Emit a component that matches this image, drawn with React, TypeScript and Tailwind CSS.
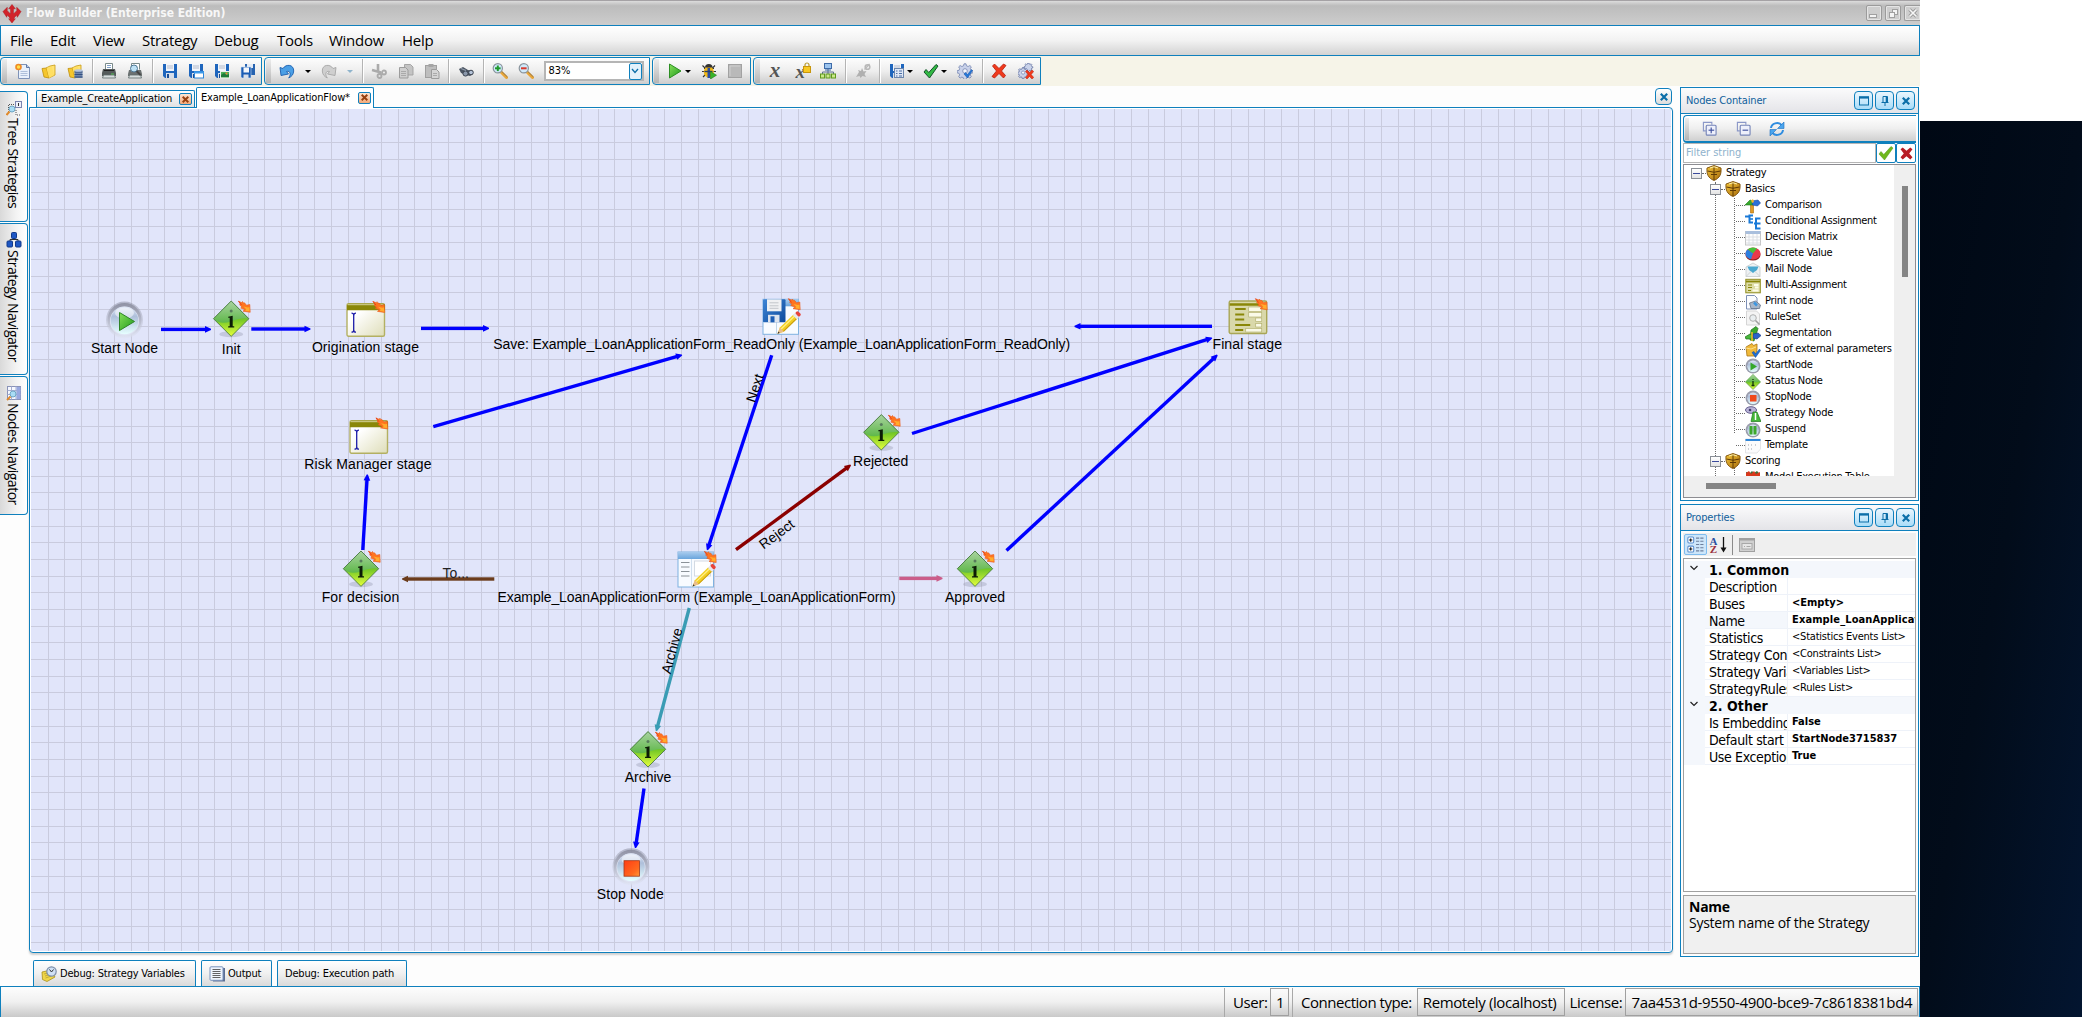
import React from "react";

const UI = "font-['DejaVu_Sans_Condensed','DejaVu_Sans',sans-serif]";

type IconProps = { className?: string; children?: React.ReactNode };

function Svg({ className = "h-4 w-4", children }: IconProps) {
  return (
    <svg viewBox="0 0 16 16" className={`shrink-0 ${className}`} fill="none">
      {children}
    </svg>
  );
}

/* ---------- shared gradients ---------- */

function Defs() {
  return (
    <svg className="absolute h-0 w-0">
      <defs>
        <linearGradient id="gTop" x1="0" y1="0" x2="0" y2="1">
          <stop offset="0" stopColor="#a9d3a0" />
          <stop offset="1" stopColor="#5fb84a" />
        </linearGradient>
        <linearGradient id="gBottom" x1="0" y1="0" x2="0" y2="1">
          <stop offset="0.3" stopColor="#3fae1c" />
          <stop offset="1" stopColor="#e6ff3c" />
        </linearGradient>
        <linearGradient id="ring" x1="0" y1="0" x2="0" y2="1">
          <stop offset="0" stopColor="#85889a" />
          <stop offset="1" stopColor="#dfe3f2" />
        </linearGradient>
        <linearGradient id="glass" x1="0" y1="0" x2="0" y2="1">
          <stop offset="0" stopColor="#dfe8f8" />
          <stop offset="0.35" stopColor="#aebfda" />
          <stop offset="1" stopColor="#e6ffff" />
        </linearGradient>
        <linearGradient id="play" x1="0" y1="0" x2="1" y2="1">
          <stop offset="0" stopColor="#86e05a" />
          <stop offset="1" stopColor="#1f9a1c" />
        </linearGradient>
        <linearGradient id="stop" x1="0" y1="0" x2="1" y2="1">
          <stop offset="0" stopColor="#ff3c14" />
          <stop offset="0.7" stopColor="#ff6a1e" />
          <stop offset="1" stopColor="#ff9a3a" />
        </linearGradient>
        <linearGradient id="form" x1="0" y1="0" x2="1" y2="1">
          <stop offset="0.3" stopColor="#ffffff" />
          <stop offset="1" stopColor="#deddb8" />
        </linearGradient>
        <linearGradient id="disk" x1="0" y1="0" x2="1" y2="1">
          <stop offset="0" stopColor="#3f86d6" />
          <stop offset="1" stopColor="#0d4a9c" />
        </linearGradient>
        <linearGradient id="winBar" x1="0" y1="0" x2="0" y2="1">
          <stop offset="0" stopColor="#a8cbee" />
          <stop offset="1" stopColor="#6aa5dc" />
        </linearGradient>
        <linearGradient id="gold" x1="0" y1="0" x2="1" y2="1">
          <stop offset="0" stopColor="#f3c53a" />
          <stop offset="1" stopColor="#a86c0c" />
        </linearGradient>
      </defs>
    </svg>
  );
}

/* ---------- toolbar icons ---------- */

const Floppy = ({ children }: { children?: React.ReactNode }) => (
  <Svg>
    <path d="M1 1h14v14H3l-2-2z" fill="#1f66bd" />
    <rect x="4" y="1" width="8" height="7" fill="#f2f5fa" />
    <path d="M5 3h6M5 5h6" stroke="#b5bccb" />
    <rect x="4" y="10" width="8" height="5" fill="#d8dfea" />
    <rect x="5" y="11" width="2" height="4" fill="#1d4f94" />
    {children}
  </Svg>
);

const NewDoc = () => (
  <Svg>
    <path d="M3.500 1.500h8l3 3v11h-11z" fill="#e8f0fb" stroke="#7f93b8" />
    <path d="M11.500 1.500v3h3" fill="#b9cbe8" stroke="#5f78a6" />
    <path d="M5.500 8.500h7M5.500 10.500h7M5.500 12.500h7" stroke="#aebfda" />
    <circle cx="3.500" cy="4" r="3.300" fill="#f08a24" />
    <circle cx="3.500" cy="4" r="1.700" fill="#ffe04a" />
  </Svg>
);
const Folder = ({ children }: { children?: React.ReactNode }) => (
  <Svg>
    <path d="M5 5l4-2 5-1v10l-6 3z" fill="#ffe374" stroke="#c99a10" strokeWidth=".8" />
    <path d="M1 5.500l4.500-.5L8 15l-5-1z" fill="#f5c62c" stroke="#bf8f0c" strokeWidth=".8" />
    <path d="M5.500 5L11 4l2 8-5 3z" fill="#ffdf62" />
    {children}
  </Svg>
);
const FolderDb = () => (
  <Folder>
    <path d="M7.500 7.500h8v7.500h-8z" fill="#6f86ad" />
    <path d="M7.500 9h8M7.500 11.500h8M7.500 14h8" stroke="#34507f" strokeWidth="1.200" />
    <ellipse cx="11.500" cy="7.500" rx="4" ry="1.300" fill="#b6c6de" />
  </Folder>
);
const Printer = () => (
  <Svg>
    <path d="M4.500 6.500v-6h7v6" fill="#fff" stroke="#7a8a8a" />
    <path d="M6 2.500h4M6 4.500h4" stroke="#7fa0c8" />
    <path d="M2 6h12l1 4v3H1v-3z" fill="#555b5b" />
    <path d="M3 7.500h10" stroke="#222" />
    <path d="M2.500 12h11l1 3h-13z" fill="#d7dede" stroke="#5d6a6a" strokeWidth=".8" />
    <path d="M10 11h3" stroke="#57c257" />
  </Svg>
);
const PrintPreview = () => (
  <Svg>
    <path d="M4.500 6.500v-6h8v6" fill="#fff" stroke="#7a8a8a" />
    <path d="M2 7h12l1 4v2H1v-2z" fill="#6b7171" />
    <path d="M2.500 12h11l1 3h-13z" fill="#d7dede" stroke="#5d6a6a" strokeWidth=".8" />
    <circle cx="7" cy="5.500" r="3.500" fill="#bfe2f5" stroke="#4d7795" />
    <path d="M9.500 8l4 4" stroke="#444" strokeWidth="1.800" />
  </Svg>
);
const SaveAs = () => (
  <Floppy>
    <rect x="6.500" y="8.500" width="9" height="6.500" fill="#fff" stroke="#2f86d8" />
    <path d="M6 9.500h10" stroke="#3f9bea" strokeWidth="2" />
  </Floppy>
);
const SaveImg = () => (
  <Floppy>
    <rect x="6.500" y="8.500" width="9" height="6.500" fill="#49b058" stroke="#e9efe9" />
    <path d="M7 12l3-2 3 2 2-1v3H7z" fill="#1f7a3a" />
    <circle cx="12.500" cy="10.500" r="1" fill="#f2853a" />
  </Floppy>
);
const SaveAll = () => (
  <Svg>
    <path d="M5 1h10v11H5z" fill="#2763b0" />
    <rect x="7" y="1" width="6" height="4" fill="#e4ebf5" />
    <path d="M1 4h10v11H2l-1-1z" fill="#1a5cb4" stroke="#cfe0f5" strokeWidth=".6" />
    <rect x="3.500" y="4.500" width="5.500" height="5" fill="#f2f5fa" />
    <rect x="3.500" y="11.500" width="5" height="3.500" fill="#d8dfea" />
  </Svg>
);
const Undo = () => (
  <Svg>
    <path d="M4 5.500C7 .5 15 1.500 14.700 8c-.2 3.500-2 5.500-5 7 2.500-3.500 1.800-7.500-2.200-6.500L9.500 11 2 12.500 1 4.500z" fill="#4a9fe6" stroke="#1c5fae" strokeWidth=".9" strokeLinejoin="round" />
  </Svg>
);
const Redo = () => (
  <Svg>
    <path d="M12 5.500C9 .5 1 1.500 1.300 8c.2 3.500 2 5.500 5 7C3.800 11.500 4.500 7.500 8.500 8.500L6.500 11l7.500 1.500 1-8z" fill="#cfcfcf" stroke="#a6a6a6" strokeWidth=".9" strokeLinejoin="round" />
  </Svg>
);
const Cut = () => (
  <Svg>
    <path d="M7 1v7M1 7l9 2.500M7 8l3 3" stroke="#ababab" strokeWidth="2.600" />
    <circle cx="13" cy="9.500" r="2" stroke="#ababab" strokeWidth="1.800" />
    <circle cx="8.500" cy="13" r="2" stroke="#ababab" strokeWidth="1.800" />
  </Svg>
);
const Copy = () => (
  <Svg>
    <path d="M6.500 1.500h6l2.500 2.500v8H6.500z" fill="#c4c4c4" stroke="#a5a5a5" />
    <path d="M1.500 4.500h6l2.500 2.500v8H1.500z" fill="#cfcfcf" stroke="#9c9c9c" />
    <path d="M3 8.500h5M3 10.500h5M3 12.500h5" stroke="#aaa" />
  </Svg>
);
const Paste = () => (
  <Svg>
    <rect x="1.500" y="2.500" width="11" height="12" fill="#bebebe" stroke="#a0a0a0" />
    <rect x="4.500" y="1" width="5" height="3" fill="#a5a5a5" />
    <path d="M7.500 6.500h5l2.500 2.500v6.500H7.500z" fill="#d5d5d5" stroke="#9c9c9c" />
    <path d="M9 10.500h4M9 12.500h4" stroke="#aaa" />
  </Svg>
);
const Binoculars = () => (
  <Svg>
    <path d="M1 6l4-2 5 3 5 1v3l-3 2-4-1-5-2z" fill="#4b5461" />
    <circle cx="7.500" cy="10.500" r="2.600" fill="#8a97aa" stroke="#3b434f" />
    <circle cx="13" cy="9.500" r="2.300" fill="#b5c3d8" stroke="#3b434f" />
    <path d="M3 5.500l5 2" stroke="#8f9aab" strokeWidth="1.300" />
  </Svg>
);
const Zoom = ({ plus }: { plus?: boolean }) => (
  <Svg>
    <path d="M9 9l5.500 5.500" stroke="#e9a63a" strokeWidth="3" strokeLinecap="round" />
    <path d="M9.800 8.500l5.700 5.500" stroke="#7d6a4a" strokeWidth=".8" />
    <circle cx="5.800" cy="5.300" r="4.600" fill="#cfe9fb" stroke="#8a949c" strokeWidth="1.200" />
    <path d="M3 5.300h5.600" stroke={plus ? "#1f9a2c" : "#d93a2c"} strokeWidth="2" />
    {plus && <path d="M5.800 2.500v5.600" stroke="#1f9a2c" strokeWidth="2" />}
  </Svg>
);
const Play = () => (
  <Svg>
    <path d="M2.500 1l11.500 7-11.500 7z" fill="url(#play)" stroke="#2c8e22" strokeLinejoin="round" />
  </Svg>
);
const Bug = () => (
  <Svg>
    <path d="M1.500 2.500l3 3M14 2.500l-3 3M1 8.500h14M2 14l3-3M3 5.500h10" stroke="#333" strokeWidth="1.100" />
    <ellipse cx="7.800" cy="9" rx="5" ry="5.800" fill="#f2b916" />
    <path d="M7.800 5v10" stroke="#2c4fa6" strokeWidth="2.600" />
    <path d="M3.500 8.500h8" stroke="#2c3f66" strokeWidth="1.400" />
    <path d="M4 4.500a3.800 3.600 0 017.600 0z" fill="#333" />
    <path d="M9.500 8.500l6 3.700-6 3.800z" fill="#37b52a" stroke="#1f7a1c" strokeWidth=".6" />
  </Svg>
);
const StopGray = () => (
  <Svg>
    <rect x="1.500" y="1.500" width="13" height="13" fill="#b9b9b9" stroke="#a2a2a2" />
    <path d="M3 13V3h10" stroke="#cfcfcf" />
  </Svg>
);
const VarX = () => (
  <span className="-mt-0.5 -ml-0.5 font-['Liberation_Serif',serif] text-[21px] leading-none font-bold text-[#555] italic">x</span>
);
const VarLock = () => (
  <span className="relative -ml-1 font-['Liberation_Serif',serif] text-[19px] leading-none font-bold text-[#555] italic">
    x
    <svg viewBox="0 0 8 11" className="absolute top-0 left-[7px] h-[11px] w-2" fill="none">
      <path d="M2 5V3a2 2 0 014 0v2" stroke="#b89a30" strokeWidth="1.200" />
      <rect x=".5" y="4.500" width="7" height="6" fill="#f7c822" stroke="#c8960c" />
    </svg>
  </span>
);
const Tree = () => (
  <Svg>
    <path d="M8 5v4M2.500 11.500V9h11v2.500M8 9v2" stroke="#5d6f90" />
    <rect x="4.500" y=".5" width="7" height="5" fill="#9cc4ee" stroke="#3d6ba8" />
    <path d="M5 7h6" stroke="#3d6ba8" />
    {[0.5, 6, 11.500].map((x) => (
      <rect key={x} x={x} y="11" width="4" height="4" fill="#c9e88a" stroke="#5f9a1c" />
    ))}
  </Svg>
);
const Disabled = () => (
  <Svg>
    <path d="M1 14l3-5-1-2 3 1 1-3 1.500 3.500 3-.5-2 3 1.500 3-3.500-1-2 2-1-2z" fill="#b0b0b0" />
    <circle cx="12.500" cy="4" r="2.300" stroke="#b8b8b8" strokeWidth="1.600" />
    <path d="M9.500 6.500L14.500 1" stroke="#b8b8b8" strokeWidth="1.200" />
  </Svg>
);
const SaveList = () => (
  <Floppy>
    <rect x="5.500" y="5.500" width="9" height="9" fill="#dfe8f6" stroke="#6b86ad" />
    <path d="M7 8h1.500M10 8h3M7 10.500h1.500M10 10.500h3M7 13h1.500M10 13h3" stroke="#4c6fa6" />
  </Floppy>
);
const Check = ({ soft }: { soft?: boolean }) => (
  <Svg>
    <path
      d="M1 9l2-2.500 2.800 3L13 1.500l2 1.500-8.500 12z"
      fill={soft ? "#6fb81c" : "#32b944"}
      stroke={soft ? "#4e9616" : "#14532a"}
      strokeWidth={soft ? 0.5 : 1}
      strokeLinejoin="round"
    />
  </Svg>
);
const gearPath =
  "M7 .8h2l.5 2 1.600.7 1.800-1 1.400 1.400-1 1.800.7 1.600 2 .5v2l-2 .5-.7 1.600 1 1.800-1.400 1.400-1.800-1-1.600.7-.5 2H7l-.5-2-1.600-.7-1.800 1-1.400-1.400 1-1.800-.7-1.600-2-.5v-2l2-.5.7-1.600-1-1.800L3.100 2.500l1.800 1 1.600-.7z";
const GearCheck = () => (
  <Svg>
    <path d={gearPath} fill="#c9d2ea" stroke="#7484b0" strokeWidth=".8" />
    <circle cx="8" cy="8" r="2.300" fill="#f4f6fc" stroke="#7484b0" strokeWidth=".8" />
    <path d="M7 11l1.500-1.500 2 2 4-5 1 1-5 7.500z" fill="#2477d8" stroke="#1553a4" strokeWidth=".5" />
  </Svg>
);
const RedX = () => (
  <Svg>
    <path d="M1.500 3l2-2L8 5.500 12.500 1l2.500 1.500L10.500 8l4 4.500-2 2.500L8 10.500 3.500 15 1 13.500 5.500 8z" fill="#f03a1c" stroke="#b81c0c" strokeWidth=".8" strokeLinejoin="round" />
  </Svg>
);
const GearsX = () => (
  <Svg>
    <g transform="translate(6 -.5) scale(.55)">
      <path d={gearPath} fill="#c9d2ea" stroke="#6575a4" strokeWidth="1.400" />
    </g>
    <g transform="translate(-.5 4) scale(.7)">
      <path d={gearPath} fill="#c9d2ea" stroke="#6575a4" strokeWidth="1.200" />
      <circle cx="8" cy="8" r="2.300" fill="#f4f6fc" stroke="#7484b0" />
    </g>
    <path d="M7.500 8.500l1.500-1.500 2.500 2.500L14 7l1.700 1.500-2.500 3 2.500 3-1.700 1.500-2.500-2.500L9 16l-1.500-1.500 2.500-3z" fill="#f03a1c" stroke="#b81c0c" strokeWidth=".5" />
  </Svg>
);

/* ---------- window chrome ---------- */

function Slot({ children }: { children: React.ReactNode }) {
  return <div className="flex w-[26.2px] shrink-0 items-center justify-center">{children}</div>;
}
function Sep() {
  return <div className="mx-[3.500px] h-full w-px shrink-0 bg-[#b4b4b4] shadow-[1px_0_0_#fff]" />;
}
function Caret({ dim, tight }: { dim?: boolean; tight?: boolean }) {
  return (
    <div className={`flex w-4 shrink-0 items-center justify-center ${tight ? "-ml-2" : ""}`}>
      <div className={`h-0 w-0 border-x-[3px] border-t-[3px] border-x-transparent ${dim ? "border-t-[#8fb4cc]" : "border-t-black"}`} />
    </div>
  );
}
function ToolGroup({ className, children }: { className: string; children: React.ReactNode }) {
  return (
    <div className={`flex h-[28px] shrink-0 rounded-l border border-[#0f80bd] bg-linear-to-b from-[#fdfdfd] via-[#eeeeee] to-[#cdcdcd] pt-px pb-px ${className}`}>
      <div className="mr-1.5 ml-px w-[5px] shrink-0 bg-linear-to-b from-[#ededed] to-[#b5b5b5]" />
      {children}
    </div>
  );
}

function TitleBar() {
  return (
    <div className="flex h-[25px] shrink-0 items-center border-t border-[#a5a2a5] bg-linear-to-b from-[#dcdcdc] via-[#bcbcbc] via-20% to-[#cdcdcd]">
      <svg viewBox="0 0 20 20" className="mx-0.5 h-[19px] w-5">
        <path d="M10 20l-3.500-4.500H8.500L5 11.500 4.500 14 .5 8l4.500-4.500L5 7l3.500 3.500V5H6.500L10 .5 13.500 5h-2v5.500L15 7V3.500L19.500 8l-4 6L15 11.500l-3.500 4h2z" fill="#d2232a" stroke="#a8141a" strokeWidth=".5" />
      </svg>
      <span className="ml-0.5 grow text-[12px] font-bold text-[#f7f7f7]">Flow Builder (Enterprise Edition)</span>
      <div className="flex gap-[3px]">
        <div className="flex h-4 w-4 items-end rounded-xs border border-[#9b9b9b] bg-[#cecece] p-[2px] shadow-[inset_0_0_0_1px_#e4e4e4]">
          <div className="h-1 w-2 border border-[#a0a0a0] bg-[#f4f4f4]" />
        </div>
        <div className="relative h-4 w-4 rounded-xs border border-[#9b9b9b] bg-[#cecece] shadow-[inset_0_0_0_1px_#e4e4e4]">
          <div className="absolute top-[3px] left-[6px] h-[6px] w-[6px] border border-[#a0a0a0] bg-[#f4f4f4]" />
          <div className="absolute top-[6px] left-[3px] h-[6px] w-[6px] border border-[#a0a0a0] bg-[#f4f4f4]" />
        </div>
        <div className="flex h-4 w-4 items-center justify-center rounded-l-xs border border-r-0 border-[#9b9b9b] bg-[#cecece] shadow-[inset_0_0_0_1px_#e4e4e4]">
          <svg viewBox="0 0 10 10" className="h-2.5 w-2.5">
            <path d="M1.500 1.500l7 7M8.500 1.500l-7 7" stroke="#9b9b9b" strokeWidth="3.400" />
            <path d="M1.500 1.500l7 7M8.500 1.500l-7 7" stroke="#f7f7f7" strokeWidth="1.600" />
          </svg>
        </div>
      </div>
    </div>
  );
}

const MENU: [string, string][] = [
  ["File", "w-[40px]"],
  ["Edit", "w-[43px]"],
  ["View", "w-[49px]"],
  ["Strategy", "w-[72px]"],
  ["Debug", "w-[63px]"],
  ["Tools", "w-[52px]"],
  ["Window", "w-[73px]"],
  ["Help", "w-[40px]"],
];

function MenuBar() {
  return (
    <div className="flex h-[31px] shrink-0 items-center border border-[#0f80bd] bg-linear-to-b from-[#ffffff] via-[#f2f2f2] to-[#d3d3d3] pl-[9px] font-['Open_Sans',sans-serif] text-[15px] tracking-[-0.280px] text-black">
      {MENU.map(([m, w]) => (
        <span key={m} className={w}>
          {m}
        </span>
      ))}
    </div>
  );
}

function Toolbars() {
  return (
    <div className="flex h-[30px] shrink-0 bg-[#f6f4e8] pt-px">
      <ToolGroup className="w-[262px]">
        <div className="-ml-[3.500px] flex">
          <Slot><NewDoc /></Slot>
          <Slot><Folder /></Slot>
          <Slot><FolderDb /></Slot>
          <Sep />
          <Slot><Printer /></Slot>
          <Slot><PrintPreview /></Slot>
          <Sep />
          <Slot><Floppy /></Slot>
          <Slot><SaveAs /></Slot>
          <Slot><SaveImg /></Slot>
          <Slot><SaveAll /></Slot>
        </div>
      </ToolGroup>
      <ToolGroup className="ml-0.5 w-[386px]">
        <div className="-ml-[3px] flex">
          <Slot><Undo /></Slot>
          <Caret />
          <Slot><Redo /></Slot>
          <Caret dim />
          <Sep />
          <Slot><Cut /></Slot>
          <Slot><Copy /></Slot>
          <Slot><Paste /></Slot>
          <Sep />
          <Slot><Binoculars /></Slot>
          <Sep />
          <Slot><Zoom plus /></Slot>
          <Slot><Zoom /></Slot>
        </div>
        <div className="mt-[2px] ml-[4px] flex h-5 w-[100px] items-center border-2 border-[#b5b5b5] bg-white pl-[3px] text-[11px] text-black">
          <span className="grow">83%</span>
          <div className="-my-px flex h-[17px] w-[13px] items-center justify-center rounded-xs border border-[#0f80bd] bg-[#e3f1fb]">
            <svg viewBox="0 0 8 6" className="h-1.5 w-2" fill="none">
              <path d="M1 1l3 3.500L7 1" stroke="#0b6ea8" strokeWidth="1.300" />
            </svg>
          </div>
        </div>
      </ToolGroup>
      <ToolGroup className="ml-0.5 w-[99px]">
        <div className="-ml-[3px] flex">
          <Slot><Play /></Slot>
          <Caret tight />
          <Slot><Bug /></Slot>
          <Slot><StopGray /></Slot>
        </div>
      </ToolGroup>
      <ToolGroup className="ml-0.5 w-[288px]">
        <div className="-ml-[3px] flex">
          <Slot><VarX /></Slot>
          <Slot><VarLock /></Slot>
          <Slot><Tree /></Slot>
          <Sep />
          <Slot><Disabled /></Slot>
          <Sep />
          <Slot><SaveList /></Slot>
          <Caret tight />
          <Slot><Check /></Slot>
          <Caret tight />
          <Slot><GearCheck /></Slot>
          <Sep />
          <Slot><RedX /></Slot>
          <Slot><GearsX /></Slot>
        </div>
      </ToolGroup>
    </div>
  );
}

/* ---------- left rail ---------- */

const RailTree = () => (
  <Svg>
    <path d="M2.500 12V4.500H8" stroke="#555" strokeDasharray="1 1" />
    <rect x="9.500" y="1.500" width="6" height="6" fill="#eef1fb" stroke="#7b85b0" />
    <path d="M12.500 3v3" stroke="#333" />
    <path d="M10 10v5h4" stroke="#555" strokeDasharray="1 1" />
    <circle cx="6" cy="9" r="3" fill="#a9dcf5" stroke="#6fa6c4" />
    <path d="M3.500 11.500L.5 15" stroke="#e08a2c" strokeWidth="2" />
  </Svg>
);
const RailStrategy = () => (
  <Svg>
    <path d="M4 10V7.500h8V10M8 7.500V5" stroke="#333" />
    <rect x="5.500" y=".5" width="5" height="6" rx="1" fill="#1f57c4" stroke="#123a8a" />
    <rect x="1" y="9" width="5.500" height="6" rx="1" fill="#1f57c4" stroke="#123a8a" />
    <rect x="9.500" y="9" width="5.500" height="6" rx="1" fill="#1f57c4" stroke="#123a8a" />
  </Svg>
);
const RailNodes = () => (
  <Svg>
    <rect x="1.500" y="1.500" width="13" height="13" fill="#f6f8ff" stroke="#8a93b8" />
    <path d="M1.500 5.500h13M1.500 9.500h13M5.500 1.500v13M10 1.500v13" stroke="#a5aed0" />
    <rect x="10.500" y="2" width="4" height="12" fill="#98a8e0" />
    <circle cx="7" cy="9" r="3" fill="#a9dcf5" stroke="#6fa6c4" />
    <path d="M4.500 11.500L1 15" stroke="#e08a2c" strokeWidth="2" />
  </Svg>
);

function RailTab({ icon, label, className }: { icon: React.ReactNode; label: string; className: string }) {
  return (
    <div className={`flex w-7 flex-col items-center rounded-r-sm border border-l-0 border-[#0f80bd] bg-linear-to-r from-[#d9d9d9] via-[#f3f3f3] via-60% to-white pt-[8px] ${className}`}>
      {icon}
      <span className="mt-[2px] -ml-0.5 font-['Open_Sans',sans-serif] text-[14px] leading-[20px] tracking-[-0.480px] whitespace-nowrap text-black [writing-mode:vertical-rl]">
        {label}
      </span>
    </div>
  );
}

/* ---------- diagram ---------- */

const CellLines = () => (
  <svg className="absolute inset-0 h-full w-full" shapeRendering="crispEdges">
    {Array.from({ length: 98 }, (_, i) => {
      const x = Math.floor(48.200 + i * 16.6667) - 31;
      return <rect key={`x${i}`} x={x} y="0" width="1" height="842" fill="#c9cbde" />;
    })}
    {Array.from({ length: 50 }, (_, i) => {
      const y = Math.floor(126.200 + i * 16.6667) - 109;
      return <rect key={`y${i}`} x="0" y={y} width="1640" height="1" fill="#c9cbde" />;
    })}
  </svg>
);

type Edge = [number, number, number, number, string];
const EDGES: Edge[] = [
  [161, 329.400, 211, 329.400, "#0000ff"],
  [251.300, 329, 310.500, 329, "#0000ff"],
  [421, 328.400, 489, 328.400, "#0000ff"],
  [433.300, 426.700, 682, 355, "#0000ff"],
  [362.800, 550, 367.300, 474.500, "#0000ff"],
  [494.300, 579, 402, 579, "#6b3c1c"],
  [771.700, 355.300, 707.300, 550, "#0000ff"],
  [736, 549.700, 850.700, 465, "#8b0000"],
  [899.300, 578.400, 942.500, 578.400, "#cb5d8a"],
  [912, 433.500, 1212, 338, "#0000ff"],
  [1006.500, 550.500, 1217.300, 355, "#0000ff"],
  [1212, 326.300, 1074.500, 326.300, "#0000ff"],
  [689.300, 608, 656.300, 731, "#3a9cb4"],
  [644, 788.500, 635.500, 848, "#0000ff"],
];

function Arrow({ e }: { e: Edge }) {
  const [x1, y1, x2, y2, c] = e;
  const len = Math.hypot(x2 - x1, y2 - y1);
  const a = (Math.atan2(y2 - y1, x2 - x1) * 180) / Math.PI;
  return (
    <g transform={`translate(${x1} ${y1}) rotate(${a})`} fill={c}>
      <rect x="0" y="-1.700" width={len - 4} height="3.400" />
      <path d={`M${len - 6} -3.300L${len} -.6V.6L${len - 6} 3.300z`} />
    </g>
  );
}

const Spark = ({ x, y }: { x: number; y: number }) => (
  <g transform={`translate(${x} ${y})`}>
    <path d="M-6-5.800L-3-4.500l1-1 .8 1.500 1.200-.2L2-1.800 5.300-2.500 5.700 5.300-1.500 4.200.2 2.600-3.800 1l1.300-1-2.500-2.300.9-.6z" fill="#ff7420" stroke="#ea5a1c" strokeWidth=".6" strokeLinejoin="round" />
    <path d="M-1-.5L3.500.5l1.500-.5.2 4.500-4.500-.8 1-1.500z" fill="#ffac2c" />
    <path d="M-6-5.800l3 3.800" stroke="#e8401c" strokeWidth=".9" />
  </g>
);

function Diamond() {
  return (
    <>
      <ellipse cx="20" cy="35.500" rx="12" ry="3" fill="#8f93a8" opacity=".35" />
      <path d="M20 2.300L37.700 20 20 37.700 2.300 20z" fill="url(#gBottom)" />
      <path d="M20 2.300L37.700 20Q31 18.500 20 22.500T2.300 20z" fill="url(#gTop)" />
      <path d="M20 2.300L37.700 20 20 37.700 2.300 20z" fill="none" stroke="#4b7a45" strokeWidth=".9" />
      <circle cx="20" cy="12.300" r="1.500" fill="#587c5c" />
      <path d="M17 18l4.500-1v10.500h1.500v1.300h-6v-1.300h1.500v-8.500H17z" fill="#0c1c06" />
    </>
  );
}
function Orb({ stop }: { stop?: boolean }) {
  return (
    <>
      <circle cx="20" cy="20" r="18.500" fill="url(#ring)" opacity=".5" />
      <circle cx="20" cy="20" r="17" fill="url(#ring)" opacity=".8" />
      <circle cx="20" cy="21" r="14.500" fill="#dfe4f4" />
      <circle cx="20" cy="20.500" r="13.800" fill="url(#glass)" />
      <ellipse cx="20" cy="13" rx="9.500" ry="5.500" fill="#fff" opacity=".5" />
      {stop ? (
        <rect x="13" y="14" width="15.500" height="15.500" fill="url(#stop)" stroke="#a03a1c" strokeWidth=".8" />
      ) : (
        <path d="M15 12.500l15 9-15 9z" fill="url(#play)" stroke="#2e8526" strokeLinejoin="round" />
      )}
    </>
  );
}
const FormNode = () => (
  <>
    <rect x="1.500" y="4" width="37.500" height="32.500" rx="1.500" fill="url(#form)" stroke="#b3b062" strokeWidth="1.400" />
    <path d="M1.500 5.500a1.500 1.500 0 011.500-1.500h35a1.500 1.500 0 011.500 1.500V10.500h-38z" fill="#8a8708" />
    <path d="M2 5h36" stroke="#d6d49a" />
    <path d="M6 13.500q2.200 0 2.200 2 0-2 2.300-2M6 32.500q2.200 0 2.200-2 0 2 2.300 2" fill="none" stroke="#1c1ca8" strokeWidth="1.200" />
    <path d="M8.200 14.500v17" stroke="#1c1ca8" strokeWidth="1.300" />
  </>
);
const Pencil = () => (
  <g transform="translate(16.500 37.500) rotate(-44)">
    <path d="M0 0l6-2.800h19v5.600H6z" fill="#f2cf22" />
    <path d="M6-.9h19" stroke="#fff08a" strokeWidth="1.200" />
    <path d="M6 2.300h19" stroke="#c79a10" />
    <path d="M0 0l6-2.800v5.600z" fill="#e9bd8c" />
    <path d="M0 0l2.200-1v2z" fill="#333" />
    <rect x="24" y="-2.800" width="3.600" height="5.600" fill="#e7e7ee" />
    <rect x="27" y="-2.800" width="3.500" height="5.600" rx="1.500" fill="#e8443a" />
  </g>
);
const WindowNode = () => (
  <>
    <rect x="2" y="3" width="35.500" height="35" fill="#f8fbff" stroke="#7fb2e0" />
    <rect x="2" y="3" width="35.500" height="7" fill="url(#winBar)" />
    <path d="M15.500 10v27.500" stroke="#d0dfee" />
    <rect x="18.500" y="12" width="16" height="15" fill="#fff" stroke="#d3dae3" />
    <path d="M5 13.500h8.500M5 18h8.500M5 22.500h8.500M5 27h8.500" stroke="#8b9298" />
    <Pencil />
  </>
);
const SaveNode = () => (
  <>
    <rect x="2" y="3" width="35.500" height="35" fill="#f8fbff" stroke="#7fb2e0" />
    <rect x="2" y="3" width="35.500" height="7" fill="url(#winBar)" />
    <path d="M15.500 26v12" stroke="#c0d6ea" />
    <rect x="2" y="3" width="22.500" height="23" rx="1" fill="url(#disk)" />
    <rect x="6" y="3" width="14.500" height="12" fill="#f0f1f2" />
    <path d="M8.500 6.500h9M8.500 9.500h9M8.500 12h9" stroke="#c2c6ca" />
    <rect x="7" y="18.500" width="11.500" height="7.500" fill="#dde4ee" />
    <rect x="9.500" y="20" width="4" height="6" fill="#1c5db4" />
    <Pencil />
  </>
);
const FinalNode = () => (
  <>
    <rect x="1.500" y="4" width="37.500" height="32.500" rx="1.500" fill="#d9d8aa" stroke="#a9a656" strokeWidth="1.400" />
    <path d="M2 7.500h36.500" stroke="#8a8708" strokeWidth="2.600" />
    <path d="M7.500 12h10.500M7.500 17.500h9M7.500 22.500h9M7.500 28h15M7.500 33h8" stroke="#8a8708" strokeWidth="1.900" />
    <g fill="#fafae8" stroke="#b5b272" strokeWidth=".7">
      <rect x="21" y="10" width="13" height="4.500" />
      <rect x="21" y="15.500" width="13" height="4.500" />
      <rect x="28" y="21" width="6" height="3.500" />
      <rect x="28" y="26.500" width="6" height="3.500" />
      <rect x="18" y="31.500" width="16" height="3.500" />
    </g>
  </>
);

type NodeDef = {
  cx: number;
  cy: number;
  label: string;
  base: number;
  lx?: number;
  icon: React.ReactNode;
  spark?: [number, number];
  fit?: string;
};
const NODES: NodeDef[] = [
  { cx: 124.500, cy: 320, label: "Start Node", base: 353.300, icon: <Orb /> },
  { cx: 231.200, cy: 318.700, label: "Init", base: 354.300, icon: <Diamond />, spark: [244.500, 307] },
  { cx: 365.500, cy: 319.700, label: "Origination stage", base: 352.300, icon: <FormNode />, spark: [379, 307.200], fit: "tracking-[0.080px]" },
  { cx: 368.500, cy: 436.700, lx: 368, label: "Risk Manager stage", base: 469.300, icon: <FormNode />, spark: [382, 423.700], fit: "tracking-[0.160px]" },
  { cx: 361, cy: 568.700, lx: 360.500, label: "For decision", base: 602.300, icon: <Diamond />, spark: [374.500, 557], fit: "tracking-[0.120px]" },
  { cx: 781, cy: 316.300, lx: 781.700, label: "Save: Example_LoanApplicationForm_ReadOnly (Example_LoanApplicationForm_ReadOnly)", base: 349.300, icon: <SaveNode />, spark: [794.500, 304.500], fit: "tracking-[-0.065px]" },
  { cx: 881.300, cy: 432.300, lx: 880.700, label: "Rejected", base: 466.300, icon: <Diamond />, spark: [894.500, 421] },
  { cx: 696, cy: 569, lx: 696.500, label: "Example_LoanApplicationForm (Example_LoanApplicationForm)", base: 602.300, icon: <WindowNode />, spark: [710.500, 557.200], fit: "tracking-[-0.075px]" },
  { cx: 975, cy: 568.700, label: "Approved", base: 602.300, icon: <Diamond />, spark: [988.500, 557] },
  { cx: 1247.700, cy: 317, lx: 1247.300, label: "Final stage", base: 349.300, icon: <FinalNode />, spark: [1261.500, 304.500], fit: "tracking-[0.100px]" },
  { cx: 648, cy: 749.300, label: "Archive", base: 782.300, icon: <Diamond />, spark: [661.500, 738] },
  { cx: 631, cy: 866.700, lx: 630.300, label: "Stop Node", base: 899.300, icon: <Orb stop />, fit: "tracking-[0.100px]" },
];

function Canvas() {
  return (
    <div className="relative h-[842px] w-[1640px] overflow-hidden bg-[#e1e5fa]">
      <CellLines />
      <svg viewBox="31 109 1640 842" className="absolute inset-0 h-full w-full font-['Liberation_Sans',sans-serif] text-[14px]">
        {EDGES.map((e, i) => (
          <Arrow key={i} e={e} />
        ))}
        {NODES.map((n) => (
          <g key={n.label}>
            <g transform={`translate(${n.cx - 20} ${n.cy - 20})`}>{n.icon}</g>
            {n.spark && <Spark x={n.spark[0]} y={n.spark[1]} />}
            <text x={n.lx ?? n.cx} y={n.base} textAnchor="middle" className={n.fit ?? ""}>
              {n.label}
            </text>
          </g>
        ))}
        <text x="442.500" y="577.500" fill="#222">To...</text>
        <text transform="translate(759.500 389.500) rotate(-72)" textAnchor="middle">Next</text>
        <text transform="translate(779.500 538) rotate(-36.500)" textAnchor="middle">Reject</text>
        <text transform="translate(676.500 652) rotate(-75)" textAnchor="middle">Archive</text>
      </svg>
    </div>
  );
}

const SmallX = ({ className = "" }: { className?: string }) => (
  <svg viewBox="0 0 8 8" className={`h-2 w-2 ${className}`} fill="none" stroke="currentColor" strokeWidth="2.200">
    <path d="M.8.800l6.400 6.400M7.200.800L.800 7.200" />
  </svg>
);

function Tab({ label, active, className }: { label: string; active?: boolean; className: string }) {
  return (
    <div className={`flex items-center rounded-t-xs border border-b-0 border-[#0f80bd] pl-[4px] text-[11px] tracking-[-0.200px] whitespace-nowrap text-black ${active ? "h-[21px] bg-white" : "h-[17px] bg-linear-to-b from-white to-[#e2e2e2]"} ${className}`}>
      <span className="grow">{label}</span>
      <span className={`mr-[2px] flex h-3 w-[13px] items-center justify-center rounded-xs border border-[#0f80bd] bg-linear-to-b from-[#fde6d2] to-[#f2a878] text-[#96400f] ${active ? "mb-px" : ""}`}>
        <SmallX className="h-[7px] w-[7px]" />
      </span>
    </div>
  );
}

function Editor() {
  return (
    <div className="ml-px flex w-[1644px] shrink-0 flex-col">
      <div className="flex h-[21px] shrink-0 items-end pl-[7px]">
        <Tab label="Example_CreateApplication" className="w-[159px]" />
        <Tab label="Example_LoanApplicationFlow*" active className="relative z-10 ml-px -mb-px w-[178px]" />
        <div className="grow" />
        <div className="mr-px mb-[2px] flex h-[17px] w-[17px] items-center justify-center rounded-sm border border-[#0f80bd] bg-linear-to-b from-white to-[#dcdcdc] text-[#0b6ea8]">
          <SmallX />
        </div>
      </div>
      <div className="h-[846px] shrink-0 rounded-r-sm rounded-bl-sm border border-[#0f80bd] bg-white p-px shadow-[0_2px_2px_rgba(0,0,0,0.18)]">
        <Canvas />
      </div>
      <div className="mt-[7px] flex h-[26px] shrink-0 items-stretch pl-[4px] text-[11px] tracking-[-0.200px] text-black">
        <BottomTab className="w-[163px] pl-[7px]" label="Debug: Strategy Variables" icon={<VarsIcon />} />
        <BottomTab className="ml-[5px] w-[71px] pl-[7px]" label="Output" icon={<OutputIcon />} />
        <BottomTab className="ml-[5px] w-[130px] pl-[7px]" label="Debug: Execution path" />
      </div>
    </div>
  );
}

const VarsIcon = () => (
  <Svg>
    <path d="M1 6l9-2 4 7-8 4.500-4.500-2z" fill="#f0d64a" stroke="#a98f1c" strokeWidth=".8" />
    <path d="M3 8l6-1.500M4 10l7-2M4.500 12l6-2" stroke="#b8a030" strokeWidth=".8" />
    <circle cx="10.500" cy="5.500" r="4.700" fill="#cfe0f4" stroke="#7d8ea8" strokeWidth="1.200" />
    <path d="M10.500 6L8.500 3.500M10.500 6l2-2.500" stroke="#333" />
  </Svg>
);
const OutputIcon = () => (
  <Svg>
    <path d="M3 2h13v13.500H4z" fill="#5d6f94" />
    <rect x="1" y=".8" width="13" height="13.500" rx="1" fill="#eef4fc" stroke="#7a93bd" />
    <path d="M3.500 3.500h8M3.500 5.500h8M3.500 7.500h8M3.500 9.500h8M3.500 11.500h8" stroke="#3c3c3c" strokeWidth=".8" />
  </Svg>
);

function BottomTab({ label, icon, className }: { label: string; icon?: React.ReactNode; className: string }) {
  return (
    <div className={`flex items-center gap-[3px] rounded-t-xs border border-b-0 border-[#0f80bd] bg-linear-to-b from-white via-[#f0f0f0] to-[#dadada] pt-px whitespace-nowrap ${className}`}>
      {icon}
      {label}
    </div>
  );
}

/* ---------- right panels ---------- */

function PanelHeader({ title }: { title: string }) {
  const btn = "flex h-[19px] w-[19px] items-center justify-center rounded-sm border border-[#0f80bd] bg-linear-to-b from-[#eaf6fe] to-[#a9dcf8] text-[#0b6ea8]";
  return (
    <div className="flex h-[26px] shrink-0 items-center gap-0.5 border-b border-[#0f80bd] bg-linear-to-b from-[#fbfbfc] to-[#e4e4e8] pr-[3px] pl-[5px]">
      <span className="grow pt-[2px] text-[11px] tracking-[-0.150px] text-[#0f5f9c]">{title}</span>
      <div className={btn}>
        <svg viewBox="0 0 10 10" className="h-2.5 w-2.5" fill="none">
          <rect x=".5" y="1" width="9" height="8" stroke="currentColor" />
          <path d="M0 1.500h10" stroke="currentColor" strokeWidth="2.200" />
        </svg>
      </div>
      <div className={btn}>
        <svg viewBox="0 0 10 10" className="h-2.5 w-2.5" fill="none" stroke="currentColor">
          <path d="M3 .5h4.500v5.500M3 .5V6M1.500 6.500h7M5 6.500V10" />
          <path d="M6.500 1v5" strokeWidth="1.600" />
        </svg>
      </div>
      <div className={btn}>
        <SmallX />
      </div>
    </div>
  );
}

const Pot = () => (
  <Svg>
    <path d="M1 3l7-2.500L15 3c.5 6-1 10-7 12.500C2 13 .5 9 1 3z" fill="url(#gold)" stroke="#7d4f08" strokeWidth=".9" />
    <path d="M1.500 6q6.500 2.500 13 0M8 1v14M5 9.500h6" stroke="#5f3a05" />
    <path d="M4 3q4-2.500 8 0" stroke="#fff1a8" />
  </Svg>
);

const Comparison = () => (
  <Svg>
    <path d="M5.500 5h3v10h-3z" fill="#e09a24" stroke="#a86a0c" strokeWidth=".6" />
    <path d="M0 7l5-5 3 1v4z" fill="#37a82c" stroke="#1d7a1a" strokeWidth=".6" />
    <path d="M7 3l6-1 2.500 3-3 3-5-1z" fill="#2b6fd8" stroke="#174a9c" strokeWidth=".6" />
    <path d="M6 2.500l2-1.500 1 3-2 1z" fill="#f2b52c" />
  </Svg>
);
const Conditional = () => (
  <Svg>
    <path d="M0 2.500h3.500M8 1.500H4.500v7H8M15.500 4.500H11v10h4.500M15.500 9.500H9" stroke="#1a7ad8" strokeWidth="2" />
    <path d="M5 5h3" stroke="#1a7ad8" strokeWidth="1.600" />
  </Svg>
);
const Matrix = () => (
  <Svg>
    <rect x=".5" y="1.500" width="15" height="13.500" fill="#fdfdfd" stroke="#c5c5c5" />
    <rect x=".5" y="1" width="15" height="3" fill="#a9bfdd" />
    <path d="M.5 7h15M.5 10h15M.5 13h15M4 4v11M8 4v11M12 4v11" stroke="#d8dbe2" strokeWidth=".9" />
  </Svg>
);
const Pie = () => (
  <Svg>
    <ellipse cx="8" cy="9" rx="7.500" ry="5.500" fill="#8c1a1a" />
    <ellipse cx="8" cy="7.500" rx="7.500" ry="6" fill="#e8384a" />
    <path d="M8 7.500L2.500 3.500A7.500 6 0 0112 2.500z" fill="#48c03a" />
    <path d="M8 7.500L2.500 3.500A7.500 6 0 006 13.300z" fill="#2c7fe0" />
  </Svg>
);
const Mail = () => (
  <Svg>
    <path d="M1 5l7-4 7 4v9.500H1z" fill="#eef1f3" stroke="#c5cacc" strokeWidth=".8" />
    <path d="M2.500 4.500h11L12 8 8 11 4 8z" fill="#4aa8d0" />
    <path d="M1 14.500l5-5M15 14.500l-5-5" stroke="#c5cacc" strokeWidth=".8" />
  </Svg>
);
const Multi = () => (
  <Svg>
    <rect x=".8" y="1.300" width="14.500" height="13.500" fill="#dedda8" stroke="#8f8c1e" />
    <path d="M1 3.500h14" stroke="#8a8708" strokeWidth="1.800" />
    <path d="M3 7h4M3 9.500h4M3 12.500h3" stroke="#8a8708" strokeWidth="1.100" />
    <path d="M9 7h4.500M10 9.500h3.500M7.500 12.500h6" stroke="#fdfde8" strokeWidth="1.800" />
  </Svg>
);
const PrintNode = () => (
  <Svg>
    <path d="M1.500 1.500h8l2.500 2.500v11H1.500z" fill="#fbfcff" stroke="#7c8fb5" />
    <path d="M4.500 9l6-2 5 4-1 3.500H6z" fill="#a8b6c8" stroke="#56657c" strokeWidth=".7" />
    <path d="M9 8.500l3 3" stroke="#3d96e0" strokeWidth="2.500" />
  </Svg>
);
const RuleSet = () => (
  <Svg>
    <path d="M1.500 1h10l3 3v11h-13z" fill="#f4f4f4" stroke="#d5d5d5" />
    <circle cx="8" cy="8" r="3.300" fill="#e9eef0" stroke="#b0b0b0" />
    <path d="M10.500 10.500l4 4" stroke="#a0a0a0" strokeWidth="1.600" />
  </Svg>
);
const Segmentation = () => (
  <Svg>
    <path d="M6 4l5-3.500 2 2L9 15l-4-1z" fill="#3aa82e" stroke="#1c701a" strokeWidth=".7" />
    <path d="M0 11l5-3 3 2-2 3H1z" fill="#4ab83c" stroke="#1c701a" strokeWidth=".7" />
    <path d="M8 8l5-1 3 2.500-4 3.500-4-1z" fill="#2b62c8" stroke="#173c8c" strokeWidth=".7" />
    <path d="M7 6v9" stroke="#e8b82c" strokeWidth="1.600" />
  </Svg>
);
const ExtParams = () => (
  <Svg>
    <path d="M1 5l6-3.500 1.500 2L12 2v6l-2 6H2z" fill="#f0b93a" stroke="#a87514" strokeWidth=".8" />
    <path d="M1 6l5 1 5-2" stroke="#fbe08a" />
    <path d="M7 10.500l2-1 1.500 2.500 4-5 1 1.500-5 7z" fill="#1f6fd8" stroke="#12488f" strokeWidth=".5" />
  </Svg>
);
const MiniOrb = ({ children }: { children: React.ReactNode }) => (
  <Svg>
    <circle cx="8" cy="8" r="7.500" fill="#9a9dad" />
    <circle cx="8" cy="8.300" r="5.800" fill="url(#glass)" />
    {children}
  </Svg>
);
const MiniDiamond = () => (
  <Svg>
    <path d="M8 .5L15.500 8 8 15.500.5 8z" fill="url(#gBottom)" stroke="#4b8a35" strokeWidth=".6" />
    <path d="M8 .5L15.500 8H.5z" fill="url(#gTop)" />
    <path d="M8 5v1M8 7v5M6.500 11.500h3" stroke="#14300c" strokeWidth="1.300" />
  </Svg>
);
const StrategyNode = () => (
  <Svg>
    <ellipse cx="6" cy="4" rx="5.500" ry="3.300" fill="#b9b3d8" stroke="#625c8c" />
    <circle cx="5" cy="4" r="1.300" fill="#433d6c" />
    <path d="M8 6h4l4 9.500H6z" fill="#45b83a" stroke="#1f7a1c" strokeWidth=".7" />
    <path d="M10.500 7v7" stroke="#fff" strokeWidth="1.500" />
  </Svg>
);
const Template = () => (
  <Svg>
    <path d="M.5 1h15v10l-3.500 4H.5z" fill="#fbfbfc" stroke="#dcdde0" strokeWidth=".8" />
    <path d="M.5 2h15" stroke="#2f86d8" strokeWidth="2" />
    <path d="M3 7h1M6 7h1M10 7h1M3 11h1M6 11h1" stroke="#9aa3b0" />
  </Svg>
);
const ModelIcon = () => (
  <Svg>
    <path d="M1 2l4 1 2-2 2 2 3-2 3 3v12H1z" fill="#3d6b3a" />
    <path d="M1 3l3-2 2 3 3-3 2 3 4-2v5H1z" fill="#d8381c" />
  </Svg>
);

const LEAVES: [string, React.ReactNode][] = [
  ["Comparison", <Comparison />],
  ["Conditional Assignment", <Conditional />],
  ["Decision Matrix", <Matrix />],
  ["Discrete Value", <Pie />],
  ["Mail Node", <Mail />],
  ["Multi-Assignment", <Multi />],
  ["Print node", <PrintNode />],
  ["RuleSet", <RuleSet />],
  ["Segmentation", <Segmentation />],
  ["Set of external parameters", <ExtParams />],
  ["StartNode", <MiniOrb><path d="M5.500 4.500l6.500 4-6.500 4z" fill="#35a82a" /></MiniOrb>],
  ["Status Node", <MiniDiamond />],
  ["StopNode", <MiniOrb><rect x="5" y="5" width="6.500" height="6.500" fill="#f0481c" /></MiniOrb>],
  ["Strategy Node", <StrategyNode />],
  ["Suspend", <MiniOrb><path d="M4.500 4h3v8.500h-3zM8.500 4h3v8.500h-3z" fill="#3da82c" /></MiniOrb>],
  ["Template", <Template />],
];

const Toggle = () => (
  <div className="flex h-[11px] w-[11px] shrink-0 items-center justify-center border border-[#8a8f96] bg-linear-to-b from-white to-[#e4e4e4]">
    <div className="h-px w-[7px] bg-[#3a4a9c]" />
  </div>
);
const Dots = ({ className }: { className: string }) => (
  <div className={`h-0 shrink-0 border-t border-dotted border-[#6b6b6b] ${className}`} />
);

function NodeTree() {
  return (
    <div className="relative h-[311px] w-[210px] overflow-hidden bg-white text-[11px] tracking-[-0.260px] whitespace-nowrap text-black">
      <div className="absolute top-[17px] left-[31px] h-[294px] border-l border-dotted border-[#6b6b6b]" />
      <div className="absolute top-[33px] left-[50px] h-[235px] border-l border-dotted border-[#6b6b6b]" />
      <div className="absolute top-[302px] left-[50px] h-[20px] border-l border-dotted border-[#6b6b6b]" />
      <div className="relative flex h-4 items-center pl-[7px]">
        <Toggle />
        <Dots className="w-[4px]" />
        <Pot />
        <span className="ml-[4px]">Strategy</span>
      </div>
      <div className="relative flex h-4 items-center pl-[26px]">
        <Toggle />
        <Dots className="w-[4px]" />
        <Pot />
        <span className="ml-[4px]">Basics</span>
      </div>
      {LEAVES.map(([label, icon]) => (
        <div key={label} className="relative flex h-4 items-center pl-[52px]">
          <Dots className="w-[9px]" />
          <span className="flex h-[15px] w-[15px]">{icon}</span>
          <span className="ml-[5px]">{label}</span>
        </div>
      ))}
      <div className="relative flex h-4 items-center pl-[26px]">
        <Toggle />
        <Dots className="w-[4px]" />
        <Pot />
        <span className="ml-[4px]">Scoring</span>
      </div>
      <div className="relative flex h-4 items-center pl-[52px]">
        <Dots className="w-[9px]" />
        <span className="flex h-[15px] w-[15px]"><ModelIcon /></span>
        <span className="ml-[5px]">Model Execution Table</span>
      </div>
    </div>
  );
}

const BoxIcon = ({ plus }: { plus?: boolean }) => (
  <Svg className="h-[15px] w-[15px]">
    <path d="M4 10.500H1.500v-9h9V4" stroke="#8b98c8" strokeWidth="1.200" />
    <rect x="4.500" y="4.500" width="10.500" height="10.500" rx="1" fill="#eef0fb" stroke="#7584b8" strokeWidth="1.200" />
    <path d="M7 9.800h6" stroke="#3d4f9c" strokeWidth="1.200" />
    {plus && <path d="M9.800 7v6" stroke="#3d4f9c" strokeWidth="1.200" />}
  </Svg>
);
const Refresh = () => (
  <Svg>
    <path d="M2 7a6 5.500 0 0110.500-3" stroke="#2f8de0" strokeWidth="2" />
    <path d="M15 1v6.500H8.500z" fill="#4aa5ee" stroke="#1f6fc0" strokeWidth=".6" />
    <path d="M14 9a6 5.500 0 01-10.500 3" stroke="#2f8de0" strokeWidth="2" />
    <path d="M1 15V8.500h6.500z" fill="#4aa5ee" stroke="#1f6fc0" strokeWidth=".6" />
  </Svg>
);

function NodesContainer() {
  return (
    <div className="flex h-[414px] flex-col border border-[#0f80bd] bg-[#fdfdfd]">
      <PanelHeader title="Nodes Container" />
      <div className="mx-[2px] mt-px flex flex-col">
        <div className="flex h-[28px] items-center rounded-l border border-r-0 border-b-2 border-[#0f80bd] bg-linear-to-b from-white via-[#efefef] to-[#cfcfcf]">
          <div className="mr-[13px] ml-px h-[22px] w-[4px] bg-linear-to-b from-[#ededed] to-[#b5b5b5]" />
          <BoxIcon plus />
          <div className="w-[19px]" />
          <BoxIcon />
          <div className="w-[18px]" />
          <Refresh />
        </div>
        <div className="flex h-5">
          <div className="flex grow items-center border border-l border-[#b5b5b5] bg-white pl-[2px] text-[11px] tracking-[-0.050px] text-[#8fb2cc]">Filter string</div>
          <div className="flex w-5 items-center justify-center rounded-xs border border-[#0f80bd] bg-white"><Check soft /></div>
          <div className="flex w-5 items-center justify-center rounded-xs border border-[#0f80bd] bg-white">
            <svg viewBox="0 0 12 12" className="h-[13px] w-[13px]">
              <path d="M.5 2l2-1.500L6 3.500 9.500.500 11.500 2 8.500 6l3 3.500-2 2L6 8.500l-3.500 3-2-2L3.500 6z" fill="#b81c24" />
            </svg>
          </div>
        </div>
        <div className="mt-px flex h-[334px] flex-col border border-[#8d8d92] bg-[#efefef]">
          <div className="flex">
            <NodeTree />
            <div className="flex grow flex-col items-center pt-[21px]">
              <div className="h-[91px] w-[6px] bg-[#858585]" />
            </div>
          </div>
          <div className="mt-[7px] ml-[22px] h-[6px] w-[70px] bg-[#858585]" />
        </div>
      </div>
    </div>
  );
}

const COMMON: [string, string, boolean][] = [
  ["Description", "", false],
  ["Buses", "<Empty>", true],
  ["Name", "Example_LoanApplicationFlow", true],
  ["Statistics", "<Statistics Events List>", false],
  ["Strategy Constraints", "<Constraints List>", false],
  ["Strategy Variables", "<Variables List>", false],
  ["StrategyRules", "<Rules List>", false],
];
const OTHER: [string, string, boolean][] = [
  ["Is Embedding", "False", true],
  ["Default start node", "StartNode3715837", true],
  ["Use Exceptions", "True", true],
];

function Category({ title }: { title: string }) {
  return (
    <div className="flex h-[17px] items-center bg-[#f4f7fc]">
      <svg viewBox="0 0 8 6" className="mx-[6px] mb-1 h-1.5 w-2" fill="none">
        <path d="M.5 1L4 4.500 7.500 1" stroke="#222" strokeWidth="1.200" />
      </svg>
      <span className="ml-[5px] pt-[2px] text-[14px] leading-[17px] font-bold tracking-[0.050px]">{title}</span>
    </div>
  );
}
function PropRow({ row }: { row: [string, string, boolean] }) {
  const [name, value, bold] = row;
  const fit = !bold ? "tracking-[-0.220px]" : name === "Name" ? "font-bold tracking-[0.120px]" : "font-bold";
  return (
    <div className="flex h-[17px]">
      <div className="w-[21px] shrink-0 bg-[#f4f7fc]" />
      <div className={`w-[83px] shrink-0 border-r border-b border-[#eef2f9] ${name === "Name" ? "bg-[#f4f7fc]" : ""}`}>
        <div className="h-4 w-[82px] overflow-hidden pl-[4px] text-[14px] leading-[18px] tracking-[-0.360px] whitespace-nowrap">{name}</div>
      </div>
      <div className={`flex grow overflow-hidden border-b border-[#eef2f9] pl-[4px] text-[11px] leading-[16px] whitespace-nowrap ${fit}`}>
        {value}
      </div>
    </div>
  );
}

function Properties() {
  return (
    <div className="mt-[3px] flex h-[453px] flex-col border border-[#0f80bd] bg-[#fdfdfd]">
      <PanelHeader title="Properties" />
      <div className="mx-[2px] mt-[2px] flex h-[23px] items-center bg-[#efefef]">
        <div className="ml-px flex h-[21px] w-[23px] items-center justify-center rounded-xs border border-[#7fbcee] bg-[#cde6fa]">
          <Svg className="h-[17px] w-[17px]">
            <rect x=".8" y="1" width="5.500" height="5.500" rx="1" fill="#fff" stroke="#5b8fd0" />
            <rect x=".8" y="9.500" width="5.500" height="5.500" rx="1" fill="#fff" stroke="#5b8fd0" />
            <path d="M2 3.800h3M3.500 2.300v3M2 12.200h3M3.500 10.700v3" stroke="#111" />
            <path d="M8.500 2h3M12.500 2h3M8.500 5h3M12.500 5h3M8.500 8h3M12.500 8h3M8.500 11h3M12.500 11h3M8.500 14h3M12.500 14h3" stroke="#6d7f9c" />
          </Svg>
        </div>
        <div className="ml-[3px] flex w-[7px] flex-col items-center font-['Liberation_Serif',serif] text-[11px] leading-[8px]">
          <span className="font-bold text-[#2c4fa0]">A</span>
          <span className="font-bold text-[#9c3040]">Z</span>
        </div>
        <svg viewBox="0 0 7 16" className="ml-[3px] h-4 w-[7px]">
          <path d="M3.500 0v12" stroke="#111" strokeWidth="1.300" />
          <path d="M.5 10.500h6L3.500 15.500z" fill="#111" />
        </svg>
        <div className="mr-[6px] ml-[5px] h-[20px] w-px bg-[#8a8a8a]" />
        <Svg className="h-4 w-4">
          <rect x=".5" y="1.500" width="15" height="13" fill="#d0d0d0" stroke="#a0a0a0" />
          <path d="M1 2.500h14" stroke="#a0a0a0" strokeWidth="2" />
          <rect x="3" y="6.500" width="10" height="5.500" fill="#e6e6e6" stroke="#a8a8a8" />
          <path d="M5 9.500h1M7.500 9.500h4" stroke="#a8a8a8" />
        </Svg>
      </div>
      <div className="mx-[2px] mt-[2px] flex h-[334px] flex-col overflow-hidden border border-[#a0a0a0] bg-white pt-[2px] text-black">
        <Category title="1. Common" />
        {COMMON.map((r) => (
          <PropRow key={r[0]} row={r} />
        ))}
        <Category title="2. Other" />
        {OTHER.map((r) => (
          <PropRow key={r[0]} row={r} />
        ))}
      </div>
      <div className="mx-[2px] mt-[3px] h-[59px] border border-[#a0a0a0] bg-[#f0f0f0] pt-[3px] pl-[5px] font-['Open_Sans',sans-serif] text-[14px] leading-[16px] tracking-[-0.250px] text-black">
        <div className="font-bold">Name</div>
        <div>System name of the Strategy</div>
      </div>
    </div>
  );
}

function StatusBar() {
  const box = "flex h-[28px] items-center border border-[#a0a0a0] pl-[5px]";
  return (
    <div className="flex h-[31px] shrink-0 justify-end border border-b-0 border-[#0f80bd] bg-linear-to-b from-[#fdfdfd] via-[#f0f0f0] to-[#c9c9c9] pr-px font-['Open_Sans',sans-serif] text-[15px] tracking-[-0.400px] whitespace-nowrap text-black">
      <div className="flex w-[694px] items-center">
        <div className="h-[29px] w-px bg-[#a8a8a8]" />
        <span className="ml-[8px] w-[37px]">User:</span>
        <div className={`w-[19px] ${box}`}>1</div>
        <div className="ml-[3px] h-[29px] w-px bg-[#a8a8a8]" />
        <span className="ml-[8px] w-[116px] tracking-[-0.460px]">Connection type:</span>
        <div className={`w-[148px] tracking-[-0.380px] ${box}`}>Remotely (localhost)</div>
        <span className="ml-[5px] w-[56px]">License:</span>
        <div className={`w-[293px] tracking-[-0.330px] ${box}`}>7aa4531d-9550-4900-bce9-7c8618381bd4</div>
      </div>
    </div>
  );
}

export default function App() {
  return (
    <div className={`flex h-[1017px] w-[2082px] overflow-hidden bg-white ${UI}`}>
      <Defs />
      <div className="flex w-[1920px] shrink-0 flex-col bg-[#fdfdfd]">
        <TitleBar />
        <MenuBar />
        <Toolbars />
        <div className="flex h-[900px] shrink-0">
          <div className="flex w-7 shrink-0 flex-col gap-px pt-[5px]">
            <RailTab className="h-[131px]" icon={<RailTree />} label="Tree Strategies" />
            <RailTab className="h-[152px]" icon={<RailStrategy />} label="Strategy Navigator" />
            <RailTab className="h-[139px]" icon={<RailNodes />} label="Nodes Navigator" />
          </div>
          <Editor />
          <div className="mt-px ml-[7px] flex w-[239px] flex-col">
            <NodesContainer />
            <Properties />
          </div>
        </div>
        <StatusBar />
      </div>
      <div className="mt-[121px] grow bg-linear-to-br from-[#000814] via-[#020c1a] to-[#031530]" />
    </div>
  );
}
